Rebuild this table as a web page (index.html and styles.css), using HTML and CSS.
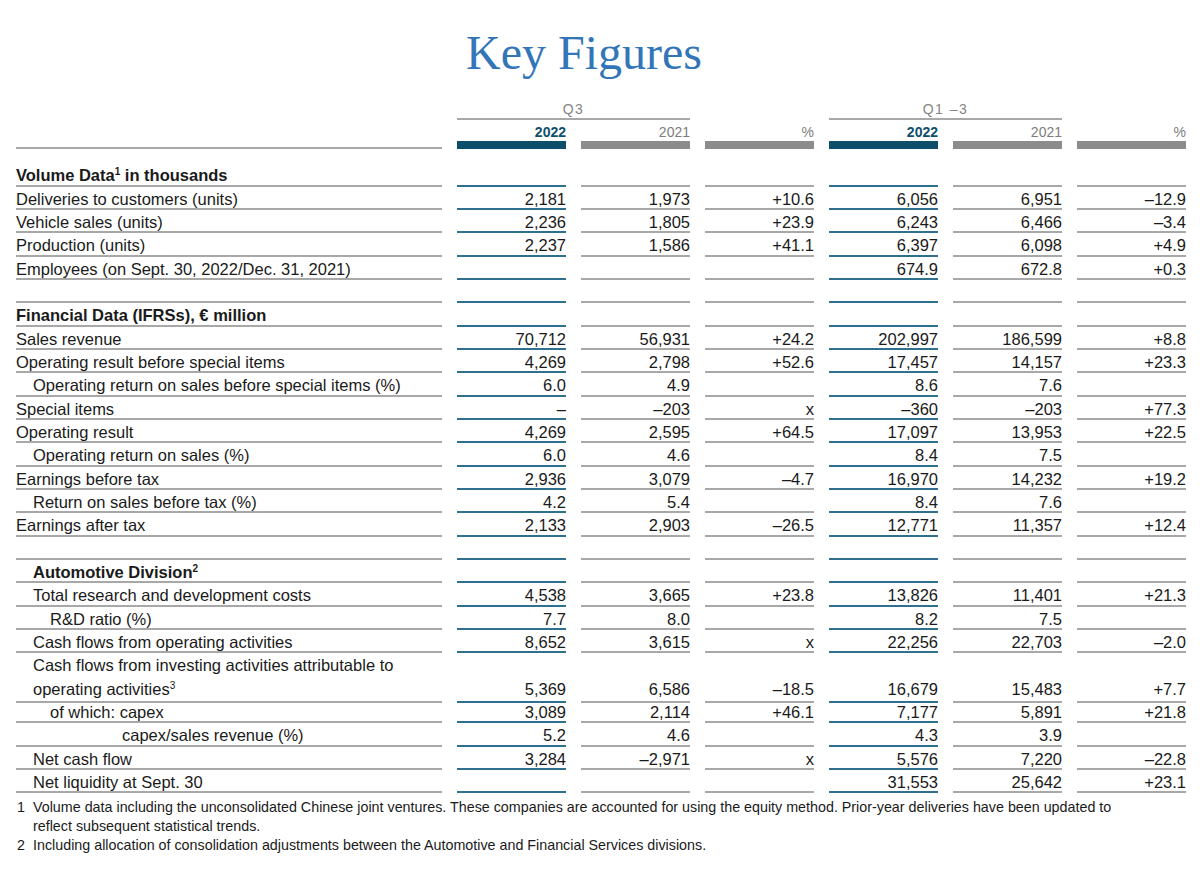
FILE: index.html
```html
<!DOCTYPE html>
<html lang="en">
<head>
<meta charset="utf-8">
<title>Key Figures</title>
<link rel="stylesheet" href="styles.css">
</head>
<body>
<div class="page">
  <h1 class="title">Key Figures</h1>

  <div class="kf">
    <div class="row ghead">
      <div class="grp g1">Q3</div>
      <div class="grp g2">Q1 –3</div>
    </div>
    <div class="row yhead">
      <div class="ylab"></div>
      <div class="yr cur">2022</div>
      <div class="yr">2021</div>
      <div class="yr">%</div>
      <div class="yr cur">2022</div>
      <div class="yr">2021</div>
      <div class="yr">%</div>
    </div>
    <div class="spacer"></div>

    <div class="row r"><div class="l b">Volume Data<sup>1</sup> in thousands</div><div class="v cur"></div><div class="v"></div><div class="v"></div><div class="v cur"></div><div class="v"></div><div class="v"></div></div>
    <div class="row r"><div class="l">Deliveries to customers (units)</div><div class="v cur">2,181</div><div class="v">1,973</div><div class="v">+10.6</div><div class="v cur">6,056</div><div class="v">6,951</div><div class="v">–12.9</div></div>
    <div class="row r"><div class="l">Vehicle sales (units)</div><div class="v cur">2,236</div><div class="v">1,805</div><div class="v">+23.9</div><div class="v cur">6,243</div><div class="v">6,466</div><div class="v">–3.4</div></div>
    <div class="row r"><div class="l">Production (units)</div><div class="v cur">2,237</div><div class="v">1,586</div><div class="v">+41.1</div><div class="v cur">6,397</div><div class="v">6,098</div><div class="v">+4.9</div></div>
    <div class="row r"><div class="l">Employees (on Sept. 30, 2022/Dec. 31, 2021)</div><div class="v cur"></div><div class="v"></div><div class="v"></div><div class="v cur">674.9</div><div class="v">672.8</div><div class="v">+0.3</div></div>
    <div class="row r"><div class="l"></div><div class="v cur"></div><div class="v"></div><div class="v"></div><div class="v cur"></div><div class="v"></div><div class="v"></div></div>

    <div class="row r"><div class="l b">Financial Data (IFRSs), € million</div><div class="v cur"></div><div class="v"></div><div class="v"></div><div class="v cur"></div><div class="v"></div><div class="v"></div></div>
    <div class="row r"><div class="l">Sales revenue</div><div class="v cur">70,712</div><div class="v">56,931</div><div class="v">+24.2</div><div class="v cur">202,997</div><div class="v">186,599</div><div class="v">+8.8</div></div>
    <div class="row r"><div class="l">Operating result before special items</div><div class="v cur">4,269</div><div class="v">2,798</div><div class="v">+52.6</div><div class="v cur">17,457</div><div class="v">14,157</div><div class="v">+23.3</div></div>
    <div class="row r"><div class="l i1">Operating return on sales before special items (%)</div><div class="v cur">6.0</div><div class="v">4.9</div><div class="v"></div><div class="v cur">8.6</div><div class="v">7.6</div><div class="v"></div></div>
    <div class="row r"><div class="l">Special items</div><div class="v cur">–</div><div class="v">–203</div><div class="v">x</div><div class="v cur">–360</div><div class="v">–203</div><div class="v">+77.3</div></div>
    <div class="row r"><div class="l">Operating result</div><div class="v cur">4,269</div><div class="v">2,595</div><div class="v">+64.5</div><div class="v cur">17,097</div><div class="v">13,953</div><div class="v">+22.5</div></div>
    <div class="row r"><div class="l i1">Operating return on sales (%)</div><div class="v cur">6.0</div><div class="v">4.6</div><div class="v"></div><div class="v cur">8.4</div><div class="v">7.5</div><div class="v"></div></div>
    <div class="row r"><div class="l">Earnings before tax</div><div class="v cur">2,936</div><div class="v">3,079</div><div class="v">–4.7</div><div class="v cur">16,970</div><div class="v">14,232</div><div class="v">+19.2</div></div>
    <div class="row r"><div class="l i1">Return on sales before tax (%)</div><div class="v cur">4.2</div><div class="v">5.4</div><div class="v"></div><div class="v cur">8.4</div><div class="v">7.6</div><div class="v"></div></div>
    <div class="row r"><div class="l">Earnings after tax</div><div class="v cur">2,133</div><div class="v">2,903</div><div class="v">–26.5</div><div class="v cur">12,771</div><div class="v">11,357</div><div class="v">+12.4</div></div>
    <div class="row r"><div class="l"></div><div class="v cur"></div><div class="v"></div><div class="v"></div><div class="v cur"></div><div class="v"></div><div class="v"></div></div>

    <div class="row r"><div class="l b i1">Automotive Division<sup>2</sup></div><div class="v cur"></div><div class="v"></div><div class="v"></div><div class="v cur"></div><div class="v"></div><div class="v"></div></div>
    <div class="row r"><div class="l i1">Total research and development costs</div><div class="v cur">4,538</div><div class="v">3,665</div><div class="v">+23.8</div><div class="v cur">13,826</div><div class="v">11,401</div><div class="v">+21.3</div></div>
    <div class="row r"><div class="l i2">R&amp;D ratio (%)</div><div class="v cur">7.7</div><div class="v">8.0</div><div class="v"></div><div class="v cur">8.2</div><div class="v">7.5</div><div class="v"></div></div>
    <div class="row r"><div class="l i1">Cash flows from operating activities</div><div class="v cur">8,652</div><div class="v">3,615</div><div class="v">x</div><div class="v cur">22,256</div><div class="v">22,703</div><div class="v">–2.0</div></div>
    <div class="row r r2"><div class="l i1">Cash flows from investing activities attributable to<br>operating activities<sup>3</sup></div><div class="v cur">5,369</div><div class="v">6,586</div><div class="v">–18.5</div><div class="v cur">16,679</div><div class="v">15,483</div><div class="v">+7.7</div></div>
    <div class="row r"><div class="l i2">of which: capex</div><div class="v cur">3,089</div><div class="v">2,114</div><div class="v">+46.1</div><div class="v cur">7,177</div><div class="v">5,891</div><div class="v">+21.8</div></div>
    <div class="row r"><div class="l i3">capex/sales revenue (%)</div><div class="v cur">5.2</div><div class="v">4.6</div><div class="v"></div><div class="v cur">4.3</div><div class="v">3.9</div><div class="v"></div></div>
    <div class="row r"><div class="l i1">Net cash flow</div><div class="v cur">3,284</div><div class="v">–2,971</div><div class="v">x</div><div class="v cur">5,576</div><div class="v">7,220</div><div class="v">–22.8</div></div>
    <div class="row r"><div class="l i1">Net liquidity at Sept. 30</div><div class="v cur"></div><div class="v"></div><div class="v"></div><div class="v cur">31,553</div><div class="v">25,642</div><div class="v">+23.1</div></div>
  </div>

  <div class="notes">
    <div class="fn"><span class="fnum">1</span><span class="ftxt">Volume data including the unconsolidated Chinese joint ventures. These companies are accounted for using the equity method. Prior-year deliveries have been updated to<br>reflect subsequent statistical trends.</span></div>
    <div class="fn"><span class="fnum">2</span><span class="ftxt">Including allocation of consolidation adjustments between the Automotive and Financial Services divisions.</span></div>
  </div>
</div>
</body>
</html>
```

FILE: styles.css
```css
* {
  box-sizing: border-box;
}

html, body {
  margin: 0;
  background: #ffffff;
}

body {
  font-family: "Liberation Sans", Arial, sans-serif;
  color: #1a1a1a;
}

.page {
  width: 1200px;
  padding: 26px 0 0 16px;
}

.title {
  margin: 0;
  width: 1170px;
  padding-right: 34px;
  text-align: center;
  font-family: "Liberation Serif", "Times New Roman", serif;
  font-weight: normal;
  font-size: 48px;
  line-height: 54px;
  color: #3375b9;
}

.row {
  display: grid;
  grid-template-columns: 426px repeat(6, 109px);
  column-gap: 15px;
}

/* group header (Q3 / Q1–3) */
.ghead {
  height: 40px;
  align-items: end;
}

.grp {
  grid-column: span 2;
  border-bottom: 2px solid #a8a8a8;
  text-align: center;
  font-size: 14px;
  line-height: 16px;
  padding-bottom: 1px;
  letter-spacing: 1.5px;
  color: #858585;
}

.g1 { grid-column: 2 / span 2; }
.g2 { grid-column: 5 / span 2; }

/* year header */
.yhead {
  height: 29px;
}

.ylab {
  border-bottom: 2px solid #a8a8a8;
}

.yr {
  padding-top: 4px;
  padding-bottom: 1px;
  line-height: 16px;
  font-size: 14px;
  text-align: right;
  color: #7d7d7d;
  border-bottom: 8px solid #8c8c8c;
}

.yr.cur {
  color: #0d4f6b;
  font-weight: bold;
  border-bottom-color: #0d4f6b;
}

.spacer {
  height: 14.333px;
}

/* data rows */
.r {
  height: 23.333px;
}

.r > div {
  height: 100%;
  padding-top: 3px;
  font-size: 16.5px;
  line-height: 18.333px;
  white-space: nowrap;
  border-bottom: 2px solid #a8a8a8;
}

.r > .v {
  text-align: right;
}

.r > .v.cur {
  border-bottom-color: #30708f;
}

.r2 {
  height: 46.667px;
}

.r2 > .v {
  padding-top: 26.333px;
}

.r2 > .l {
  padding-top: 1px;
  line-height: 23.333px;
}

.l.b {
  font-weight: bold;
}

.l.i1 { padding-left: 17px; }
.l.i2 { padding-left: 34px; }
.l.i3 { padding-left: 106px; }

sup {
  font-size: 10px;
  line-height: 0;
  vertical-align: 6px;
}

/* footnotes */
.notes {
  margin-top: 5px;
  width: 1170px;
  font-size: 14.3px;
  line-height: 19px;
  color: #1a1a1a;
}

.fn {
  display: grid;
  grid-template-columns: 17px 1fr;
}

.fnum {
  padding-left: 1px;
}
```
